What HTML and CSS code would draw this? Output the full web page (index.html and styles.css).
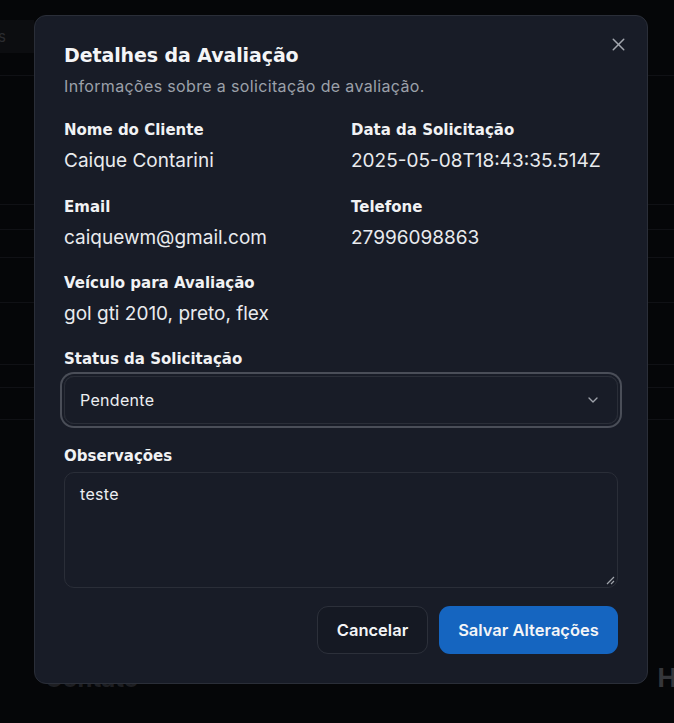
FILE: index.html
```html
<!DOCTYPE html>
<html lang="pt-BR">
<head>
<meta charset="utf-8">
<title>Detalhes da Avaliação</title>
<link rel="stylesheet" href="styles.css">
</head>
<body>
<div class="page">
  <div class="page-top"></div>
  <div class="page-head"><span class="head-text">Solicitações</span></div>
  <div class="rows">
    <div class="row r1"></div>
    <div class="row r2"></div>
    <div class="row r3"></div>
    <div class="row r4"></div>
    <div class="row r5"></div>
    <div class="row r6"></div>
    <div class="row r7"></div>
    <div class="row r8"></div>
  </div>
  <div class="page-footer">
    <span class="foot-title">Contato</span>
    <span class="foot-h">H</span>
  </div>
</div>

<div class="dialog" role="dialog">
  <button class="close" aria-label="Fechar">
    <svg width="21" height="21" viewBox="0 0 24 24" fill="none" stroke="currentColor" stroke-width="1.7" stroke-linecap="round"><path d="M18 6 6 18"/><path d="m6 6 12 12"/></svg>
  </button>
  <div class="dlg-head">
    <h2 class="dlg-title">Detalhes da Avaliação</h2>
    <p class="dlg-sub">Informações sobre a solicitação de avaliação.</p>
  </div>

  <div class="fields">
    <div class="field"><div class="label">Nome do Cliente</div><div class="value">Caique Contarini</div></div>
    <div class="field"><div class="label">Data da Solicitação</div><div class="value">2025-05-08T18:43:35.514Z</div></div>
    <div class="field"><div class="label">Email</div><div class="value">caiquewm@gmail.com</div></div>
    <div class="field"><div class="label">Telefone</div><div class="value">27996098863</div></div>
    <div class="field wide"><div class="label">Veículo para Avaliação</div><div class="value">gol gti 2010, preto, flex</div></div>
  </div>

  <div class="block status">
    <div class="label">Status da Solicitação</div>
    <div class="select">
      <span>Pendente</span>
      <svg width="16" height="16" viewBox="0 0 24 24" fill="none" stroke="currentColor" stroke-width="2" stroke-linecap="round" stroke-linejoin="round"><path d="m6 9 6 6 6-6"/></svg>
    </div>
  </div>

  <div class="block obs">
    <div class="label">Observações</div>
    <div class="textarea">teste
      <svg class="grip" width="9" height="9" viewBox="0 0 9 9"><path d="M8 1 1 8M8 5 5 8" stroke="#a0a4ab" stroke-width="1.2"/></svg>
    </div>
  </div>

  <div class="actions">
    <button class="btn btn-outline">Cancelar</button>
    <button class="btn btn-primary">Salvar Alterações</button>
  </div>
</div>
</body>
</html>
```

FILE: styles.css
```css
* { box-sizing: border-box; }
html, body { margin: 0; padding: 0; }
body {
  background: #050608;
  font-family: Inter, "Liberation Sans", sans-serif;
  width: 674px;
  height: 723px;
  overflow: hidden;
  position: relative;
}

/* background page */
.page { display: flex; flex-direction: column; height: 723px; }
.page-top { height: 20px; }
.page-head {
  height: 33px;
  width: 34px;
  background: #0c0d10;
  display: flex;
  align-items: center;
  justify-content: flex-end;
  padding-right: 28px;
  overflow: hidden;
}
.head-text { color: #2a2b2f; font-size: 15px; white-space: nowrap; }
.rows { display: flex; flex-direction: column; }
.row { border-bottom: 1px solid #101115; }
.r1 { height: 23px; }
.r2 { height: 129px; }
.r3 { height: 25px; }
.r4 { height: 28px; }
.r5 { height: 45px; }
.r6 { height: 62px; }
.r7 { height: 23px; }
.r8 { height: 32px; }
.page-footer {
  margin-top: auto;
  height: 60px;
  display: flex;
  justify-content: space-between;
  align-items: baseline;
  padding: 0 0 0 45px;
}
.foot-title { font-size: 24px; font-weight: 700; color: #1e1f23; line-height: 30px; }
.foot-h { font-size: 26px; font-weight: 700; color: #35363a; margin-right: -3px; line-height: 30px; }

/* dialog */
.dialog {
  position: absolute;
  left: 34px;
  top: 15px;
  width: 614px;
  height: 669px;
  background: #181c27;
  border: 1px solid #2a2e38;
  border-radius: 12px;
  padding: 24px 29px 28px;
  color: #f1f2f4;
  display: flex;
  flex-direction: column;
}
.close {
  position: absolute;
  right: 18px;
  top: 18px;
  background: none;
  border: 0;
  padding: 0;
  color: #a3a7af;
  display: flex;
}
.dlg-head { display: flex; flex-direction: column; gap: 6px; }
.dlg-title {
  margin: 0;
  font-family: "DejaVu Sans", sans-serif;
  font-size: 19px;
  line-height: 30px;
  font-weight: 700;
  letter-spacing: -0.1px;
  color: #f4f5f7;
}
.dlg-sub {
  margin: 0;
  font-size: 16px;
  letter-spacing: 0.35px;
  line-height: 20px;
  color: #9ca1aa;
}

.fields {
  margin-top: 23px;
  display: grid;
  grid-template-columns: 1fr 1fr;
  column-gap: 20px;
  row-gap: 23px;
}
.field { display: flex; flex-direction: column; gap: 8px; }
.wide { grid-column: 1 / 3; margin-top: -1px; }
.label {
  font-family: "DejaVu Sans", sans-serif;
  font-size: 15px;
  line-height: 22px;
  font-weight: 700;
  color: #f1f2f4;
}
.value {
  font-size: 19px;
  line-height: 24px;
  color: #e9ebee;
}

.block { display: flex; flex-direction: column; }
.status { margin-top: 22px; gap: 6px; }
.select {
  height: 48px;
  border: 1px solid #2a2e38;
  border-radius: 10px;
  box-shadow: 0 0 0 2px #181c27, 0 0 0 4px #4a4e58;
  display: flex;
  align-items: center;
  justify-content: space-between;
  padding: 0 16px 0 15px;
  font-size: 16px;
  letter-spacing: 0.3px;
  color: #eceef1;
}
.select svg { color: #9ea2aa; }

.obs { margin-top: 21px; gap: 5px; }
.textarea {
  position: relative;
  height: 116px;
  border: 1px solid #2a2e38;
  border-radius: 10px;
  padding: 10px 15px;
  font-size: 16px;
  letter-spacing: 0.3px;
  line-height: 22px;
  color: #eceef1;
}
.grip { position: absolute; right: 2px; bottom: 2px; }

.actions {
  margin-top: 18px;
  display: flex;
  justify-content: flex-end;
  gap: 11px;
}
.btn {
  height: 48px;
  border-radius: 11px;
  font-family: Inter, "Liberation Sans", sans-serif;
  font-size: 16.5px;
  font-weight: 600;
  padding: 0;
  color: #f4f5f7;
}
.btn-outline { background: #151923; border: 1px solid #2c303a; width: 111px; }
.btn-primary { background: #1565c0; border: 0; width: 179px; }
```
